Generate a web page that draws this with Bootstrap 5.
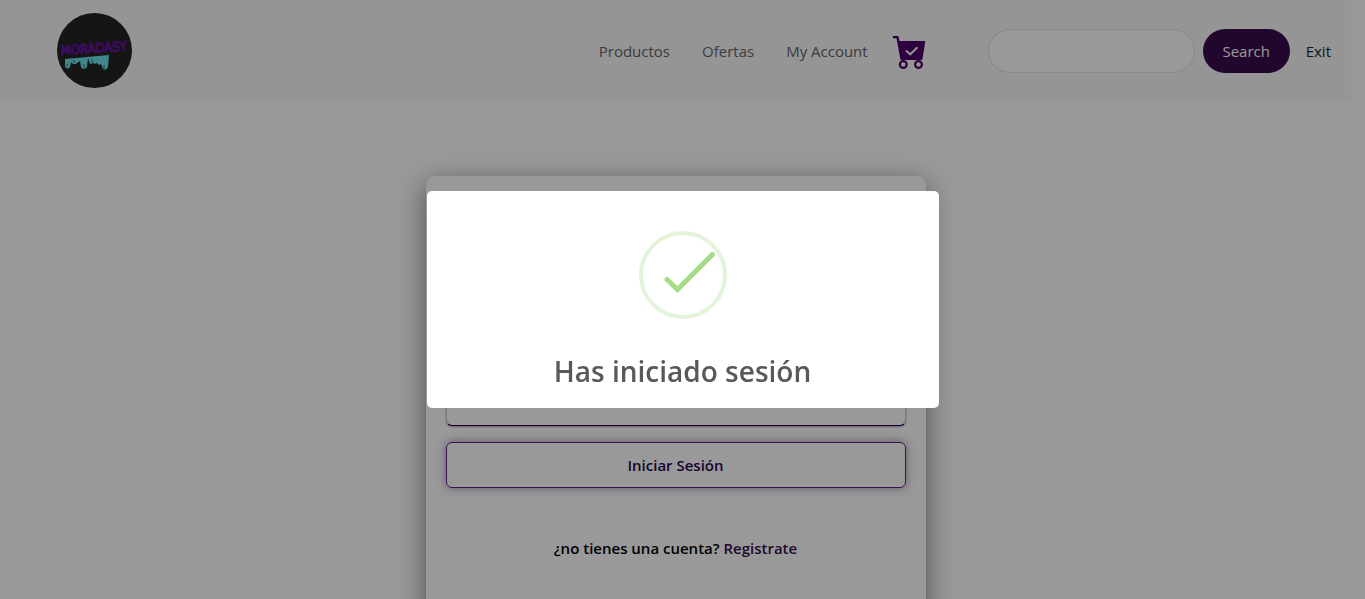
<!DOCTYPE html>
<html lang="es">
<head>
<meta charset="utf-8">
<meta name="viewport" content="width=device-width, initial-scale=1">
<title>Moradasy - Iniciar sesión</title>
<link href="https://cdn.jsdelivr.net/npm/bootstrap@5.3.0/dist/css/bootstrap.min.css" rel="stylesheet">
<style>
  body { font-family: "Segoe UI", "Open Sans", "Noto Sans", sans-serif; font-size: 15px; line-height: 24px; padding-right: 14px; }
  .site-nav { padding: 13px 20px 13px 57px; }
  .site-nav .nav-link, .site-nav .exit-link { font-size: 15px; color: #636464; padding: 8px; }
  .site-nav .exit-link { color: #212529; padding: 0; margin-left: 8px; }
  .nav-gap { gap: 16px; }
  .cart-link { margin-left: 16px; margin-right: 62px; }
  .search-box { width: 207px; height: 44px; }
  .btn-search { --bs-btn-bg: #370c4b; --bs-btn-color: #fff; --bs-btn-hover-bg: #4f006c; --bs-btn-hover-color: #fff; width: 87px; height: 44px; font-size: 15px; line-height: 24px; }
  .login-card { max-width: 500px; margin-top: 75px; padding: 20px 20px 60px; border-radius: 10px; box-shadow: 0 8px 28px rgba(0, 0, 0, .5); }
  .login-title { font-size: 28px; line-height: 40px; margin: 34px 0 48px; }
  .login-input { height: 46px; border-color: #ccc; border-bottom-color: #32004f; box-shadow: 0 1px 2px rgba(50, 0, 79, .4); border-radius: 6px; }
  .btn-login { height: 46px; color: #2c0552; border: 1px solid #661985; border-radius: 6px; box-shadow: 0 0 10px rgba(60, 20, 90, .5); font-size: 15px; font-weight: 600; }
  .signup-line { margin-top: 32px; font-weight: 600; color: #000; }
  .signup-line a { color: #370c4b; }
  .shade { background: rgba(0, 0, 0, .4); }
  .notice-dialog { max-width: 512px; }
  .notice-box { border: 0; border-radius: 5px; padding: 40px 20px 17px; }
  .notice-title { font-size: 28px; line-height: 40px; font-weight: 600; color: #595959; margin: 32px 0 0; }
</style>
</head>
<body class="overflow-hidden">
<nav class="site-nav bg-light d-flex align-items-center" aria-label="Principal">
  <a href="#" class="d-flex" aria-label="Moradasy">
    <svg width="75" height="75" viewBox="0 0 75 75" aria-hidden="true">
      <circle cx="37.500" cy="37.500" r="37.500" fill="#232323"/>
      <path d="M8 46 52 42 51 54Q49 58 46 56L44 51 42 52 40 50 37 51 36 49Q33 54 32 48L31 45 30 54Q26 58 24 54L23 48 20 50Q17 53 14 49L13 54Q11 57 8 54Z" fill="#6be1e8"/>
      <g fill="none" stroke="#247078" stroke-width="1"><path d="M10 51v3M17 47v3M27 51v4M35 46v3M47 52v4"/></g>
      <text x="4" y="42" transform="rotate(-4 4 42)" fill="#232323" stroke="#6d12a5" stroke-width="1" font-family="DejaVu Sans Condensed, sans-serif" font-size="13">MORADASY</text>
    </svg>
  </a>
  <div class="nav nav-gap ms-auto flex-nowrap align-items-center">
    <a class="nav-link" href="#">Productos</a>
    <a class="nav-link" href="#">Ofertas</a>
    <a class="nav-link" href="#">My Account</a>
  </div>
  <a href="#" class="cart-link d-flex" aria-label="Carrito">
    <svg width="34" height="38" viewBox="0 -4 34 38" aria-hidden="true">
      <path d="M1 0h4.500q1 0 1.200 1L7.500 5H33.300L30.500 23q-.2 1-1.200 1H9.500q-1 0-1.200-1L4.500 2.200H1.200Q0 1 1 0Z" fill="#4f006c"/>
      <g fill="none" stroke="#4f006c" stroke-width="2.200"><circle cx="11.300" cy="28.500" r="3.400"/><circle cx="26.500" cy="28.500" r="3.400"/></g>
      <path d="m14 14.500 4.200 3.800 7.300-7" fill="none" stroke="#f8f9fa" stroke-width="2"/>
    </svg>
  </a>
  <form class="d-flex gap-2 align-items-center">
    <input class="form-control rounded-pill search-box" type="search" aria-label="Search">
    <button class="btn btn-search rounded-pill" type="button">Search</button>
    <a href="#" class="exit-link text-decoration-none">Exit</a>
  </form>
</nav>

<main class="login-card mx-auto bg-white">
  <h1 class="login-title text-center">Iniciar Sesión</h1>
  <form class="d-grid gap-3">
    <input class="form-control login-input" type="email" aria-label="Correo">
    <input class="form-control login-input" type="password" aria-label="Contraseña">
    <button class="btn btn-login" type="button">Iniciar Sesión</button>
  </form>
  <p class="signup-line text-center pt-3 mb-0">¿no tienes una cuenta? <a href="#" class="text-decoration-none">Registrate</a></p>
</main>

<div class="modal show d-block shade" role="dialog" aria-modal="true" aria-labelledby="noticeTitle">
  <div class="modal-dialog modal-dialog-centered notice-dialog">
    <div class="modal-content notice-box align-items-center">
      <svg width="88" height="88" viewBox="0 0 88 88" fill="none" aria-hidden="true">
        <circle cx="44" cy="44" r="42" stroke="#e4f4db" stroke-width="4"/>
        <path d="m28 48.500 10.500 10L73.500 23.500" stroke="#a5dc86" stroke-width="5" stroke-linecap="round"/>
      </svg>
      <h2 class="notice-title" id="noticeTitle">Has iniciado sesión</h2>
    </div>
  </div>
</div>
<script src="https://cdn.jsdelivr.net/npm/bootstrap@5.3.0/dist/js/bootstrap.bundle.min.js"></script>
</body>
</html>
